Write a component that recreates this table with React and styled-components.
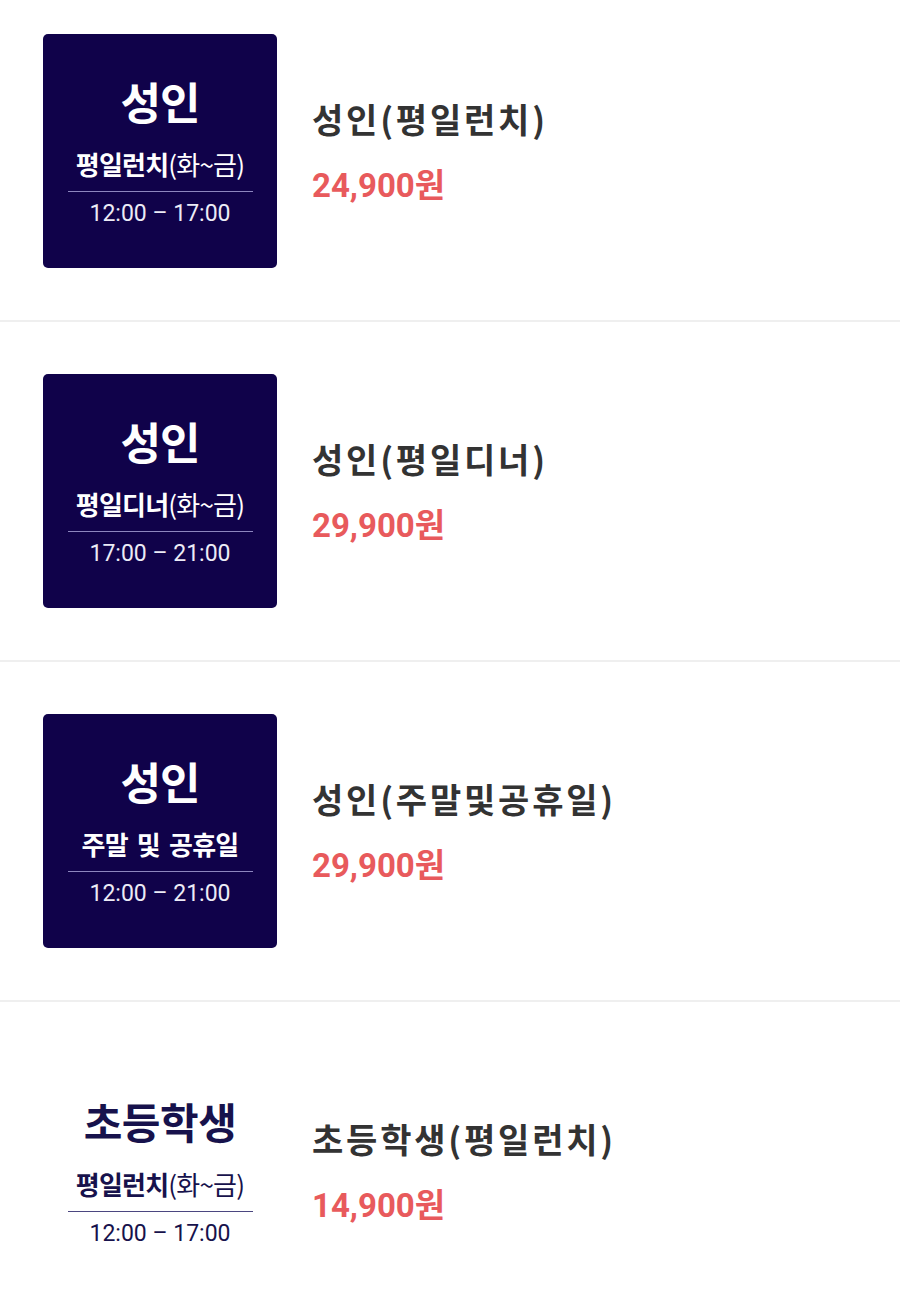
import React from "react";
import styled, { createGlobalStyle, css } from "styled-components";

const GlobalStyle = createGlobalStyle`
  html, body {
    margin: 0;
    padding: 0;
    background: #ffffff;
  }
  body {
    font-family: Roboto, "Noto Sans CJK KR", sans-serif;
  }
`;

const menus = [
  {
    badge: "성인",
    day: "평일런치",
    dayNote: "(화~금)",
    time: "12:00 – 17:00",
    name: "성인(평일런치)",
    price: "24,900원",
  },
  {
    badge: "성인",
    day: "평일디너",
    dayNote: "(화~금)",
    time: "17:00 – 21:00",
    name: "성인(평일디너)",
    price: "29,900원",
  },
  {
    badge: "성인",
    day: "주말 및 공휴일",
    time: "12:00 – 21:00",
    name: "성인(주말및공휴일)",
    price: "29,900원",
  },
  {
    badge: "초등학생",
    day: "평일런치",
    dayNote: "(화~금)",
    time: "12:00 – 17:00",
    name: "초등학생(평일런치)",
    price: "14,900원",
    plain: true,
  },
];

const MenuPage = () => {
  return (
    <List>
      {menus.map((item, i) => (
        <Row key={i} $first={i === 0} $last={i === menus.length - 1}>
          <Badge $plain={item.plain}>
            <BadgeTitle $small={item.badge.length > 2}>{item.badge}</BadgeTitle>
            <BadgeDay>
              {item.day}
              {item.dayNote && <span>{item.dayNote}</span>}
            </BadgeDay>
            <BadgeRule />
            <BadgeTime>{item.time}</BadgeTime>
          </Badge>
          <Info>
            <Name>{item.name}</Name>
            <Price>{item.price}</Price>
          </Info>
        </Row>
      ))}
    </List>
  );
};

const List = styled.div`
  display: flex;
  flex-direction: column;
`;

const Row = styled.div`
  display: flex;
  align-items: center;
  gap: 35px;
  padding: 52px 43px 52px 43px;
  border-bottom: 2px solid #efefef;
  ${(p) =>
    p.$first &&
    css`
      padding-top: 34px;
      padding-bottom: 52px;
    `}
  ${(p) =>
    p.$last &&
    css`
      border-bottom: none;
    `}
`;

const Badge = styled.div`
  width: 234px;
  height: 234px;
  flex-shrink: 0;
  border-radius: 5px;
  background: #10024a;
  color: #ffffff;
  display: flex;
  flex-direction: column;
  align-items: center;
  justify-content: center;
  font-family: "Noto Sans CJK KR", sans-serif;
  --rule: #8d86bf;
  --time: #ecebf6;
  ${(p) =>
    p.$plain &&
    css`
      background: #ffffff;
      color: #17124c;
      --rule: #4b4680;
      --time: #17124c;
    `}
`;

const BadgeTitle = styled.div`
  font-size: ${(p) => (p.$small ? "42px" : "44px")};
  line-height: 52px;
  font-weight: 700;
  letter-spacing: ${(p) => (p.$small ? "-0.5px" : "-1px")};
`;

const BadgeDay = styled.div`
  margin-top: 21px;
  font-size: 26px;
  line-height: 32px;
  font-weight: 700;
  letter-spacing: -0.8px;
  word-spacing: 4px;
  span {
    font-weight: 400;
  }
`;

const BadgeRule = styled.div`
  width: 185px;
  height: 1px;
  margin-top: 11px;
  background: var(--rule);
`;

const BadgeTime = styled.div`
  margin-top: 9px;
  font-family: Roboto, "Noto Sans CJK KR", sans-serif;
  font-size: 23px;
  line-height: 26px;
  font-weight: 400;
  color: var(--time);
`;

const Info = styled.div`
  display: flex;
  flex-direction: column;
  gap: 27px;
`;

const Name = styled.div`
  font-family: "Noto Sans CJK KR", sans-serif;
  font-size: 34px;
  line-height: 42px;
  font-weight: 700;
  color: #333333;
  letter-spacing: 2.8px;
`;

const Price = styled.div`
  font-family: Roboto, "Noto Sans CJK KR", sans-serif;
  font-size: 33px;
  line-height: 38px;
  font-weight: 700;
  color: #e85a5c;
`;

export default function App() {
  return (
    <>
      <GlobalStyle />
      <MenuPage />
    </>
  );
}
